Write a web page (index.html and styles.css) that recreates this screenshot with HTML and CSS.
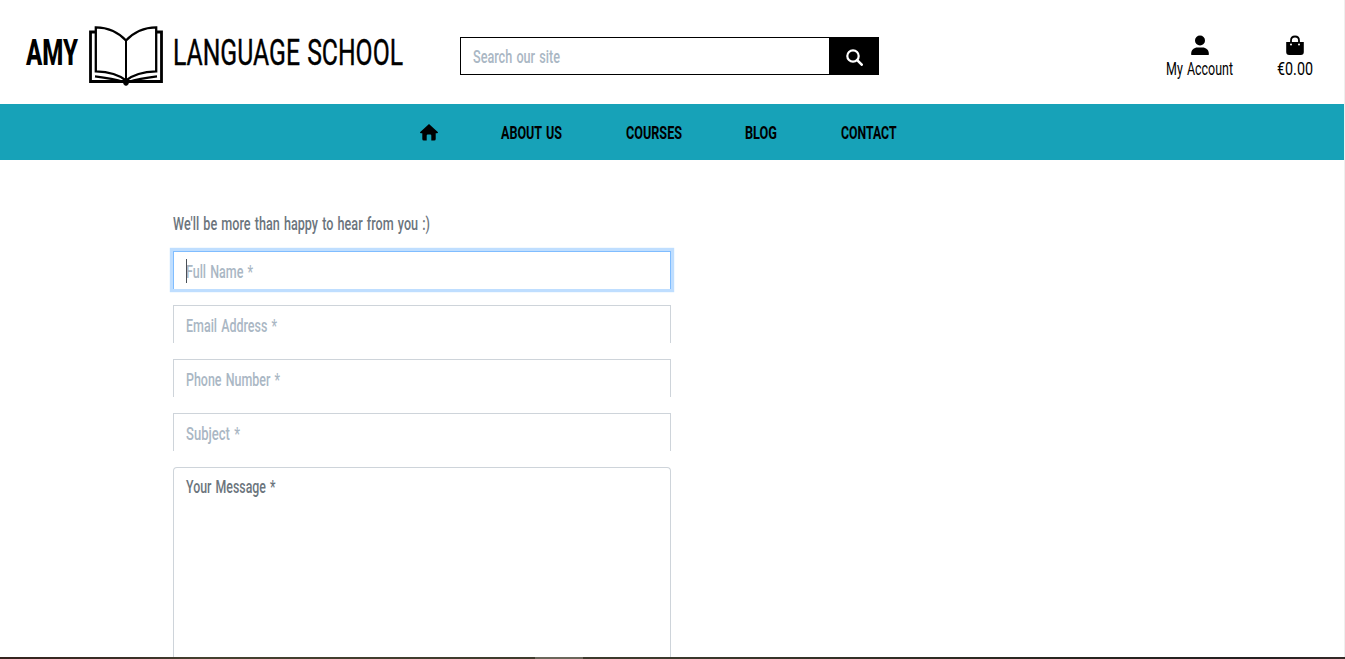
FILE: index.html
```html
<!DOCTYPE html>
<html lang="en">
<head>
<meta charset="utf-8">
<title>Amy Language School - Contact</title>
<link rel="stylesheet" href="styles.css">
</head>
<body>
<div class="page">
  <header class="header">
    <a class="brand">
      <svg class="type brand-bold" width="53" height="54"><text x="0" y="39" textLength="52" lengthAdjust="spacingAndGlyphs">AMY</text></svg>
      <svg class="book" width="74" height="62" viewBox="0 0 74 62" fill="none" stroke="#000">
        <path d="M6 6H1.500V55.500H72.500V6H68" stroke-width="2.800"/>
        <path d="M6.800 1.300Q25 1.500 37 14.500Q49 1.500 67.200 1.300V45.300Q47 46 37 54.500Q27 46 6.800 45.300Z" stroke-width="2.300"/>
        <path d="M37 14V56" stroke-width="2"/>
        <path d="M6 50.300Q24 52.500 35 56M68 50.300Q50 52.500 39 56" stroke-width="2.200"/>
        <circle cx="37" cy="57" r="2.300" fill="#000"/>
      </svg>
      <svg class="type brand-light" width="230" height="54"><text x="-1" y="39" textLength="230" lengthAdjust="spacingAndGlyphs">LANGUAGE SCHOOL</text></svg>
    </a>
    <div class="search">
      <div class="search-input"><svg class="type hint" width="90" height="24"><text x="0" y="19" textLength="87" lengthAdjust="spacingAndGlyphs">Search our site</text></svg></div>
      <div class="search-button"><svg width="17" height="17" viewBox="0 0 17 17" fill="none" stroke="#fff"><circle cx="7" cy="7" r="5.700" stroke-width="2.200"/><path d="M11.200 11.200L15.700 15.700" stroke-width="2.600" stroke-linecap="round"/></svg></div>
    </div>
    <div class="tools">
      <a class="tool">
        <svg width="18" height="20" viewBox="0 0 18 20"><circle cx="9" cy="5.500" r="5"/><path d="M0.200 19.500V18.500C0.200 14.800 3 12.400 6.500 12.400H11.500C15 12.400 17.800 14.800 17.800 18.500V19.500Q17.800 20 17 20H1Q0.200 20 0.200 19.500Z"/></svg>
        <svg class="type light" width="68" height="24"><text x="0" y="19" textLength="67" lengthAdjust="spacingAndGlyphs">My Account</text></svg>
      </a>
      <a class="tool">
        <svg width="18" height="20" viewBox="0 0 18 20"><path d="M0.200 7H17.800V17Q17.800 20 14.800 20H3.200Q0.200 20 0.200 17Z"/><path d="M5 9V5.500Q5 1.500 9 1.500T13 5.500V9" fill="none" stroke="#000" stroke-width="1.800"/><circle cx="5" cy="9.500" r="1" fill="#fff"/><circle cx="13" cy="9.500" r="1" fill="#fff"/></svg>
        <svg class="type light" width="36" height="24"><text x="0" y="19" textLength="36" lengthAdjust="spacingAndGlyphs">€0.00</text></svg>
      </a>
    </div>
  </header>
  <nav class="nav">
    <a><svg width="18" height="17" viewBox="0 0 18 17"><path d="M9 0L18 8.200Q18 9.300 17 9.300H15.700V15Q15.700 16.500 14.200 16.500H11.300V11.500Q11.300 10.500 10.300 10.500H7.700Q6.700 10.500 6.700 11.500V16.500H3.800Q2.300 16.500 2.300 15V9.300H1Q0 9.300 0 8.200Z"/></svg></a>
    <a><svg class="type strong" width="61" height="24"><text x="0" y="19" textLength="61" lengthAdjust="spacingAndGlyphs">ABOUT US</text></svg></a>
    <a><svg class="type strong" width="56" height="24"><text x="0" y="19" textLength="56" lengthAdjust="spacingAndGlyphs">COURSES</text></svg></a>
    <a><svg class="type strong" width="32" height="24"><text x="0" y="19" textLength="32" lengthAdjust="spacingAndGlyphs">BLOG</text></svg></a>
    <a><svg class="type strong" width="56" height="24"><text x="0" y="19" textLength="55.500" lengthAdjust="spacingAndGlyphs">CONTACT</text></svg></a>
  </nav>
  <main class="contact">
    <svg class="type muted intro" width="260" height="24"><text x="0" y="19" textLength="257" lengthAdjust="spacingAndGlyphs">We'll be more than happy to hear from you :)</text></svg>
    <div class="field focused"><span class="caret"></span><svg class="type hint" width="70" height="24"><text x="0" y="19" textLength="67" lengthAdjust="spacingAndGlyphs">Full Name *</text></svg></div>
    <div class="field"><svg class="type hint" width="95" height="24"><text x="0" y="19" textLength="91" lengthAdjust="spacingAndGlyphs">Email Address *</text></svg></div>
    <div class="field"><svg class="type hint" width="97" height="24"><text x="0" y="19" textLength="94" lengthAdjust="spacingAndGlyphs">Phone Number *</text></svg></div>
    <div class="field"><svg class="type hint" width="60" height="24"><text x="0" y="19" textLength="54" lengthAdjust="spacingAndGlyphs">Subject *</text></svg></div>
    <div class="message"><svg class="type muted" width="95" height="24"><text x="0" y="19" textLength="89.500" lengthAdjust="spacingAndGlyphs">Your Message *</text></svg></div>
  </main>
  <div class="edge"><span class="edge-mark"></span></div>
</div>
</body>
</html>
```
FILE: styles.css
```css
* { box-sizing: border-box; }
body { margin: 0; background: #fff; overflow: hidden; }
svg { display: block; flex: none; }
.page {
  height: 659px;
  display: flex;
  flex-direction: column;
  border-right: 1px solid #efefef;
}
.type {
  font-family: Roboto, "Liberation Sans", sans-serif;
  font-size: 18px;
  font-weight: 400;
  word-spacing: 1.5px;
  overflow: visible;
}
.hint { fill: #aab7c4; font-weight: 500; }
.muted { fill: #6c757d; font-weight: 500; }
.light { fill: #000; }
.strong { fill: #000; font-weight: 700; }
.brand-bold { font-size: 36.5px; font-weight: 800; }
.brand-light { font-size: 36.5px; stroke: #000; stroke-width: 0.4px; }

.header { height: 104px; flex: none; display: flex; }
.brand { width: 460px; padding: 26px 0 0 26px; display: flex; }
.book { margin: 0 11px 0 10px; }
.search { width: 419px; height: 38px; margin-top: 37px; display: flex; }
.search-input { flex: 1; border: 1px solid #000; border-right: 0; padding: 6px 12px; }
.search-button {
  width: 50px;
  background: #000;
  display: flex;
  align-items: center;
  justify-content: center;
  padding-top: 2px;
}
.tools { margin-left: auto; padding: 35px 31px 0 0; display: flex; gap: 43px; }
.tool { display: flex; flex-direction: column; align-items: center; gap: 1px; }

.nav {
  height: 56px;
  flex: none;
  background: #17a2b8;
  display: flex;
  align-items: center;
  gap: 63.6px;
  padding-left: 419.6px;
}
.nav a:first-child { padding-top: 1px; }

.contact {
  flex: 1;
  min-height: 0;
  width: 671px;
  padding: 51px 0 0 173px;
  display: flex;
  flex-direction: column;
}
.intro { margin-bottom: 16px; }
.field {
  position: relative;
  height: 38px;
  flex: none;
  margin-bottom: 16px;
  padding: 7px 12px 0;
  border: 1px solid #ced4da;
  border-bottom: 0;
}
.field.focused { border-color: #80bdff; box-shadow: 0 0 0 3.2px #bfdeff; }
.caret {
  position: absolute;
  left: 12px;
  top: 7px;
  width: 1px;
  height: 24px;
  background: #495057;
}
.message {
  flex: 1;
  padding: 6px 12px 0;
  border: 1px solid #ced4da;
  border-bottom: 0;
  border-radius: 4px 4px 0 0;
}
.edge {
  height: 2px;
  flex: none;
  margin-right: -1px;
  padding-left: 535px;
  background: linear-gradient(90deg, #35231e, #3a3027 10%, #45412f 15%, #3b392c 50%, #27251f 80%, #242021 94%, #352a28);
}
.edge-mark { display: block; width: 48px; height: 2px; background: #6b675b; }
```
